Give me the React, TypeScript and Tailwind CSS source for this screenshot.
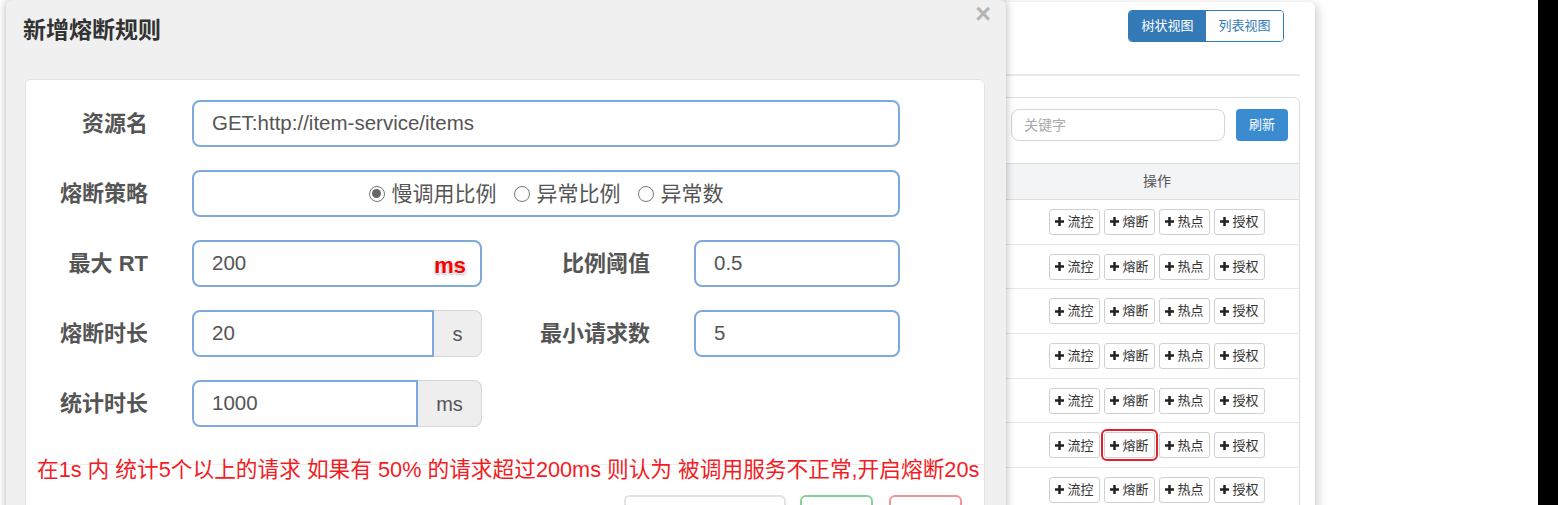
const cjk = "font-['Liberation_Sans','Noto_Sans_CJK_SC',sans-serif]";

const ops = ["流控", "熔断", "热点", "授权"];

function PlusGlyph() {
  return (
    <svg width="9" height="9" viewBox="0 0 10 10" className="shrink-0">
      <rect x="3.6" y="0" width="2.8" height="10" fill="#222" />
      <rect x="0" y="3.6" width="10" height="2.8" fill="#222" />
    </svg>
  );
}

function OpButton({ label, marked }: { label: string; marked?: boolean }) {
  return (
    <button
      className={`flex h-[26px] w-[51px] items-center justify-center gap-[3px] rounded-[3px] border border-[#d0d0d0] bg-white text-[13px] text-[#333] ${
        marked ? "outline-2 outline-offset-[1px] outline-[#e0202a]" : ""
      }`}
    >
      <PlusGlyph />
      <span>{label}</span>
    </button>
  );
}

function BackgroundPanel() {
  return (
    <div className="ml-[680px] mt-[2px] flex h-[520px] w-[635px] flex-col rounded-md bg-white shadow-[3px_2px_10px_rgba(0,0,0,0.18)]">
      <div className="flex justify-end pr-[31px] pt-[8px]">
        <div className="flex h-[32px] overflow-hidden rounded-[4px] border border-[#337ab7] text-[13px]">
          <span className="flex w-[77px] items-center justify-center bg-[#337ab7] text-white">树状视图</span>
          <span className="flex w-[77px] items-center justify-center bg-white text-[#337ab7]">列表视图</span>
        </div>
      </div>
      <div className="mr-[15px] mt-[32px] border-t-2 border-[#e8e8e8]" />
      <div className="mr-[15px] mt-[21px] flex flex-1 flex-col rounded-md border border-[#dedede]">
        <div className="flex items-center justify-end gap-[11px] pr-[11px] pt-[11px]">
          <div className="flex h-[32px] w-[214px] items-center rounded-[8px] border border-[#d5d5d5] px-[12px] text-[14px] text-[#aaa]">
            关键字
          </div>
          <button className="h-[32px] w-[52px] rounded-[4px] bg-[#3b8bd0] text-[13px] text-white">刷新</button>
        </div>
        <div className="mt-[22px] flex h-[37px] border-y border-[#dedede] bg-[#f3f4f6]">
          <div className="flex-1" />
          <div className="flex w-[284px] items-center justify-center text-[14px] text-[#555]">操作</div>
        </div>
        {[0, 1, 2, 3, 4, 5, 6].map((i) => (
          <div key={i} className="flex h-[44.7px] shrink-0 border-b border-[#e6e6e6]">
            <div className="flex-1" />
            <div className="flex w-[284px] items-center justify-center gap-[4px]">
              {ops.map((o) => (
                <OpButton key={o} label={o} marked={i === 5 && o === "熔断"} />
              ))}
            </div>
          </div>
        ))}
      </div>
    </div>
  );
}

function Label({ text, w }: { text: string; w: string }) {
  return <span className={`${w} shrink-0 text-right text-[22px] font-bold text-[#555]`}>{text}</span>;
}

const inputBox =
  "flex h-[47px] items-center border-2 border-[#7eaadb] bg-white pl-[18px] text-[20.5px] text-[#555]";

function Addon({ text, w }: { text: string; w: string }) {
  return (
    <span
      className={`${w} flex h-[47px] items-center justify-center rounded-r-[8px] border border-l-0 border-[#d6d6d6] bg-[#eeeeee] text-[20px] text-[#555]`}
    >
      {text}
    </span>
  );
}

function Radio({ label, checked }: { label: string; checked?: boolean }) {
  return (
    <span className="flex items-center gap-[7px]">
      <span className="flex h-[16px] w-[16px] items-center justify-center rounded-full border-[1.5px] border-[#777] bg-white">
        {checked && <span className="h-[9px] w-[9px] rounded-full bg-[#666]" />}
      </span>
      <span className="text-[21px] text-[#555]">{label}</span>
    </span>
  );
}

function Modal() {
  return (
    <div className="absolute left-[6px] top-0 h-[530px] w-[1000px] rounded-md bg-[#f0f0f0] shadow-[0_0_8px_rgba(0,0,0,0.3)]">
      <div className="flex h-[60px] justify-between pl-[17px] pr-[15px]">
        <span className="self-center text-[23px] font-bold text-[#333]">新增熔断规则</span>
        <span className="mt-[3px] self-start text-[27px] font-bold leading-[22px] text-[#b5b5b5]">×</span>
      </div>
      <div className="ml-[19px] mt-[19px] flex h-[460px] w-[960px] flex-col rounded-md border border-[#e3e3e3] bg-white pt-[20px]">
        <div className="flex flex-col gap-[23px]">
          <div className="flex items-center">
            <Label text="资源名" w="w-[122px]" />
            <div className={`${inputBox} ml-[44px] w-[708px] rounded-[8px]`}>GET:http://item-service/items</div>
          </div>
          <div className="flex items-center">
            <Label text="熔断策略" w="w-[122px]" />
            <div className="ml-[44px] flex h-[47px] w-[708px] items-center justify-center gap-[17px] rounded-[8px] border-2 border-[#7eaadb]">
              <Radio label="慢调用比例" checked />
              <Radio label="异常比例" />
              <Radio label="异常数" />
            </div>
          </div>
          <div className="flex items-center">
            <Label text="最大 RT" w="w-[122px]" />
            <div className={`${inputBox} relative ml-[44px] w-[290px] rounded-[8px]`}>
              200
              <span className="absolute bottom-[3px] right-[14px] text-[22px] font-bold text-[#f00] [text-shadow:1px_1px_1px_#fff,-1px_1px_2px_#bbb,1px_2px_2px_#bbb]">
                ms
              </span>
            </div>
            <Label text="比例阈值" w="w-[168px]" />
            <div className={`${inputBox} ml-[44px] w-[206px] rounded-[8px]`}>0.5</div>
          </div>
          <div className="flex items-center">
            <Label text="熔断时长" w="w-[122px]" />
            <div className="ml-[44px] flex w-[290px]">
              <div className={`${inputBox} w-[242px] rounded-l-[8px]`}>20</div>
              <Addon text="s" w="w-[48px]" />
            </div>
            <Label text="最小请求数" w="w-[168px]" />
            <div className={`${inputBox} ml-[44px] w-[206px] rounded-[8px]`}>5</div>
          </div>
          <div className="flex items-center">
            <Label text="统计时长" w="w-[122px]" />
            <div className="ml-[44px] flex w-[290px]">
              <div className={`${inputBox} w-[226px] rounded-l-[8px]`}>1000</div>
              <Addon text="ms" w="w-[64px]" />
            </div>
          </div>
        </div>
        <div className="relative mt-[29px] h-[28px]">
          <div className="absolute left-[12px] right-0 top-[8px] border-t border-[#ececec]" />
          <p className="relative whitespace-nowrap pl-[11px] text-[21.7px] leading-[28px] text-[#f21c24]">
            在1s 内 统计5个以上的请求 如果有 50% 的请求超过200ms 则认为 被调用服务不正常,开启熔断20s
          </p>
        </div>
        <div className="mt-[11px] flex pl-[598px]">
          <span className="h-[40px] w-[162px] rounded-[6px] border-2 border-[#e2e2e2]" />
          <span className="ml-[14px] h-[40px] w-[73px] rounded-[6px] border-2 border-[#86cf96]" />
          <span className="ml-[16px] h-[40px] w-[73px] rounded-[6px] border-2 border-[#ef9499]" />
        </div>
      </div>
    </div>
  );
}

export default function App() {
  return (
    <div className={`${cjk} flex h-[505px] w-[1558px] overflow-hidden bg-white`}>
      <div className="relative flex-1">
        <BackgroundPanel />
        <Modal />
      </div>
      <div className="w-[20px] bg-black" />
    </div>
  );
}
